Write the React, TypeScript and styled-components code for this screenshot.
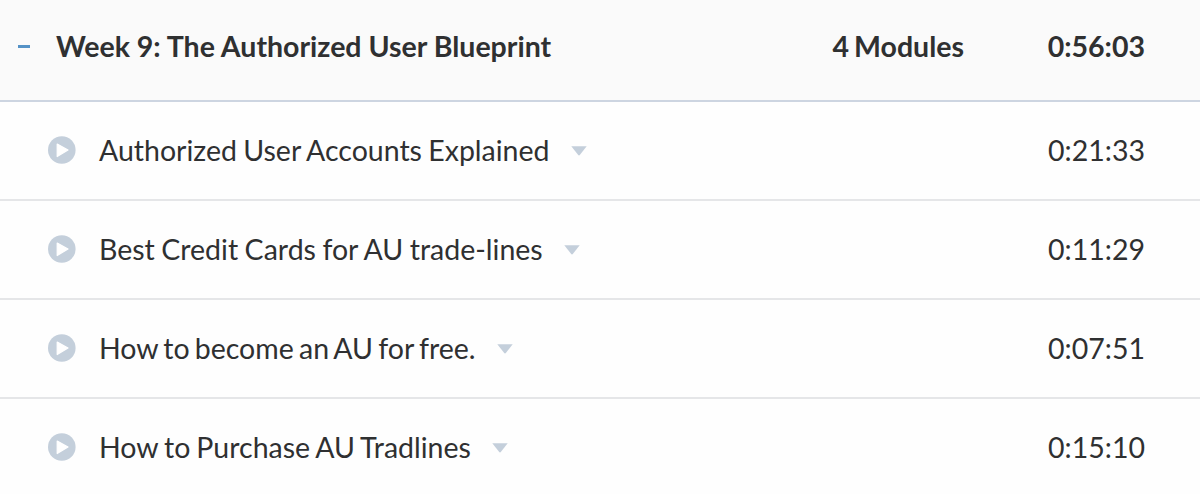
import React from 'react';
import styled, { createGlobalStyle } from 'styled-components';

const GlobalStyle = createGlobalStyle`
  body {
    margin: 0;
    background: #fefefe;
    overflow: hidden;
  }
`;

const Section = styled.section`
  font-family: Lato, sans-serif;
  font-size: 28.5px;
  line-height: 34px;
  color: #2f3031;
  height: 494px;
  overflow: hidden;
`;

const Header = styled.header`
  box-sizing: border-box;
  display: flex;
  align-items: center;
  height: 102px;
  padding: 0 55px 8px 18px;
  background: #fafafa;
  border-bottom: 2px solid #cdd5e1;
  font-weight: bold;
`;

const Minus = styled.span`
  width: 12px;
  height: 3px;
  margin: 1px 26px 0 0;
  background: #5592c6;
`;

const Title = styled.span`
  flex: 1;
`;

const Count = styled.span`
  word-spacing: -2px;
`;

const Duration = styled.span`
  width: 181px;
  text-align: right;
`;

const Row = styled.div`
  box-sizing: border-box;
  display: flex;
  align-items: center;
  height: 99px;
  padding: 0 55px 1px 48px;
  border-bottom: 2px solid #e5e6e8;
`;

const Name = styled.span<{ $spacing: number }>`
  white-space: nowrap;
  word-spacing: ${({ $spacing }) => $spacing}px;
`;

const PlayIcon = styled.svg`
  width: 28px;
  height: 28px;
  margin-right: 23px;
`;

const Caret = styled.svg`
  width: 16px;
  height: 10px;
  margin: 2px auto 0 21px;
`;

const modules = [
  { name: 'Authorized User Accounts Explained', duration: '0:21:33', spacing: -1 },
  { name: 'Best Credit Cards for AU trade-lines', duration: '0:11:29', spacing: -0.8 },
  { name: 'How to become an AU for free.', duration: '0:07:51', spacing: -2.1 },
  { name: 'How to Purchase AU Tradlines', duration: '0:15:10', spacing: -1.3 },
];

const ModuleRow = ({ name, duration, spacing }: (typeof modules)[number]) => (
  <Row>
    <PlayIcon viewBox="0 0 28 28">
      <circle cx="13.8" cy="14" r="13.8" fill="#c4cfdb" />
      <path
        d="M9.2 8 L20 14 L9.2 20.5 Z"
        fill="#fff"
        stroke="#fff"
        strokeWidth="1.2"
        strokeLinejoin="round"
      />
    </PlayIcon>
    <Name $spacing={spacing}>{name}</Name>
    <Caret viewBox="0 0 16 10">
      <path d="M0.3 0.3 H15.7 L9 8.8 Q8 10 7 8.8 Z" fill="#c4cfdb" />
    </Caret>
    <Duration>{duration}</Duration>
  </Row>
);

export default function App() {
  return (
    <>
      <GlobalStyle />
      <Section>
        <Header>
          <Minus />
          <Title>Week 9: The Authorized User Blueprint</Title>
          <Count>4 Modules</Count>
          <Duration>0:56:03</Duration>
        </Header>
        {modules.map((module) => (
          <ModuleRow key={module.name} {...module} />
        ))}
      </Section>
    </>
  );
}
